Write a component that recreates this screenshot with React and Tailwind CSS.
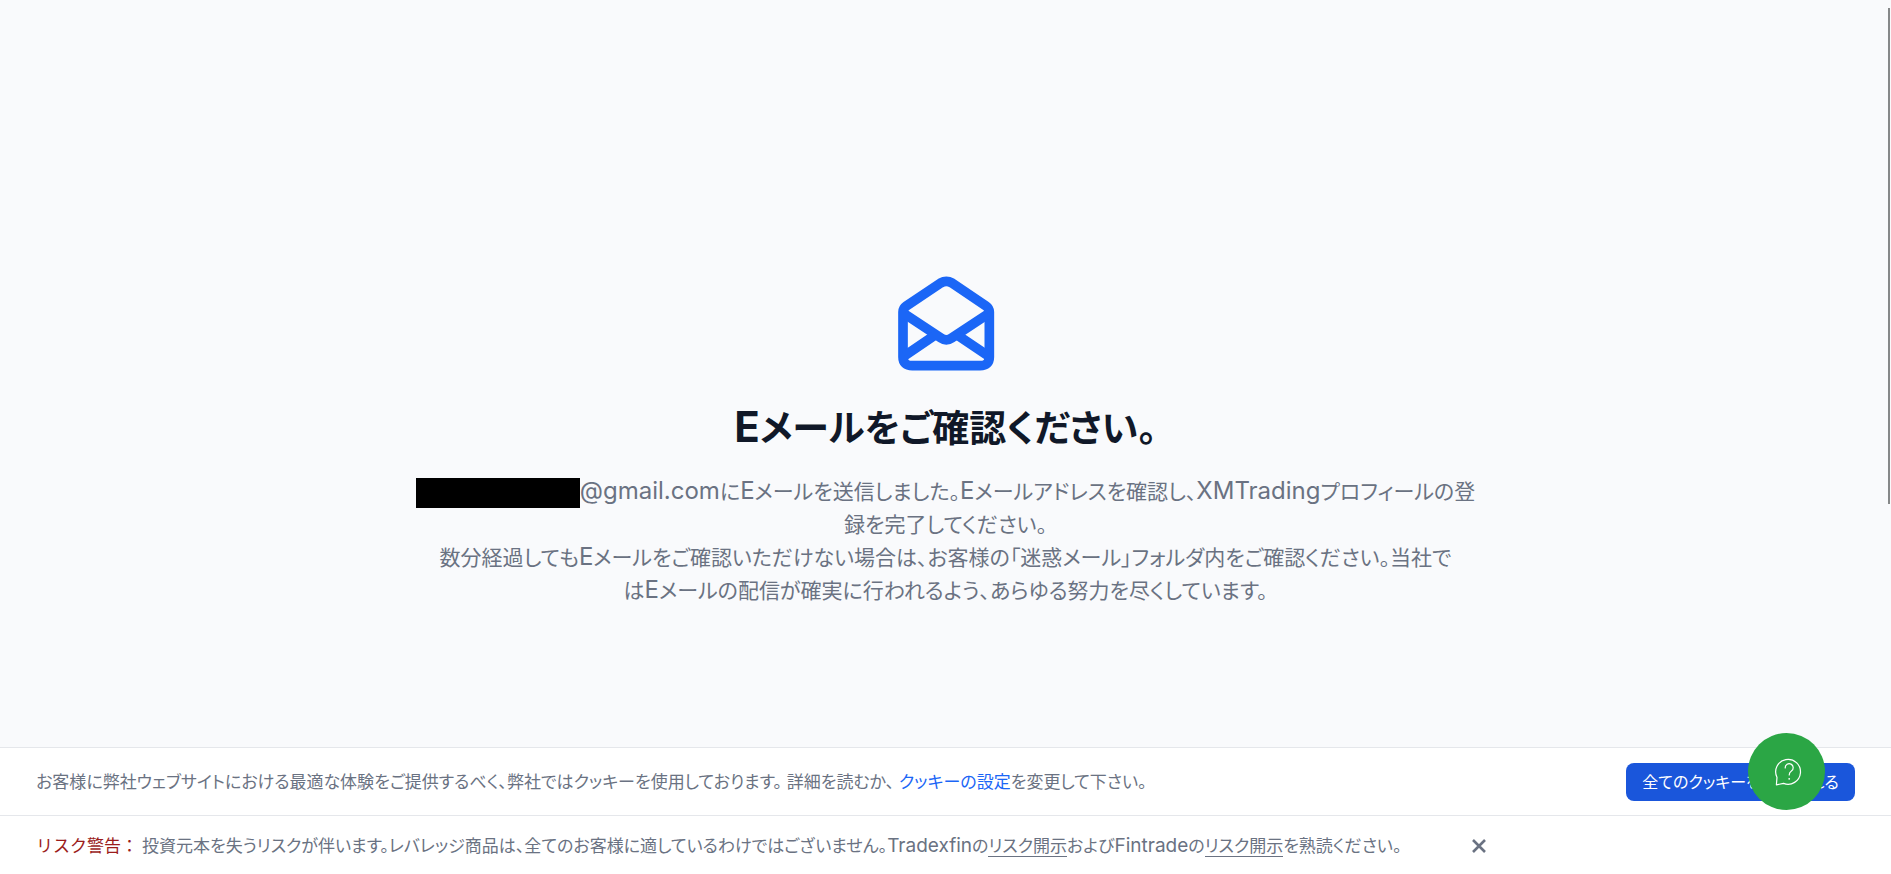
import { useState } from 'react';

function MailOpenIcon() {
  return (
    <svg className="w-25 h-24" viewBox="109 75 300 288" fill="none" stroke="#1b66f6" strokeWidth="29" strokeLinejoin="round" aria-hidden="true">
      <path d="M130 186 Q130 175 140 168 L243 99 Q260 89 277 99 L379 168 Q389 175 389 186 V321 Q389 347 361 347 H158 Q130 347 130 321 Z" />
      <path d="M135 192 L244 264 Q260 275 276 264 L385 192" />
      <path d="M135 317 L222 258 M385 317 L297 258" />
    </svg>
  );
}

function HelpIcon() {
  return (
    <svg className="w-7 h-7" viewBox="0 0 28 28" fill="none" stroke="currentColor" strokeWidth="1.2" strokeLinecap="round" strokeLinejoin="round" aria-hidden="true">
      <path d="M1.4 26.8 L2 19.4 A12.4 12.4 0 1 1 8.6 25.4 Z" />
      <path d="M10.2 10 V9.8 A4 4 0 1 1 16.4 13 Q14.2 14.4 14.2 17" />
      <circle cx="14.2" cy="20.8" r="0.9" fill="currentColor" stroke="none" />
    </svg>
  );
}

// Latin text is set a little larger than the Japanese text round it
function Latin({ children }) {
  return <span className="text-[24px] leading-none">{children}</span>;
}

export default function App() {
  const [showRisk, setShowRisk] = useState(true);

  return (
    <div className="relative flex min-h-screen flex-col bg-[#f9fafc] font-['Inter','Noto_Sans_CJK_JP',sans-serif] text-gray-500 [font-feature-settings:'palt']">
      <main className="flex flex-1 flex-col items-center px-6 pt-[275px]">
        <MailOpenIcon />
        <h1 className="mt-8 text-center text-[37px] leading-12 font-bold text-gray-900">
          <span className="text-[42px]">E</span>メールをご確認ください。
        </h1>
        <p className="mt-[22px] text-center text-[21px] leading-[33px]">
          <span className="inline-block h-[30px] w-[164px] bg-black align-middle"></span>
          <Latin>@gmail.com</Latin>に<Latin>E</Latin>メールを送信しました。<Latin>E</Latin>メールアドレスを確認し、<Latin>XMTrading</Latin>プロフィールの登
          <br />
          録を完了してください。
          <br />
          数分経過しても<Latin>E</Latin>メールをご確認いただけない場合は、お客様の「迷惑メール」フォルダ内をご確認ください。当社で
          <br />
          は<Latin>E</Latin>メールの配信が確実に行われるよう、あらゆる努力を尽くしています。
        </p>
      </main>

      <footer className="bg-white text-[17px] leading-7">
        <div className="relative flex items-center justify-between border-t border-gray-200 px-9 pt-[15px] pb-[14px]">
          <p>
            お客様に弊社ウェブサイトにおける最適な体験をご提供するべく、弊社ではクッキーを使用しております。 詳細を読むか、{' '}
            <a href="#cookies" className="text-[#1b66f6]">クッキーの設定</a>を変更して下さい。
          </p>
          <button type="button" className="h-[38px] w-[229px] rounded-lg bg-[#1a56db] text-[16px] whitespace-nowrap text-white">
            全てのクッキーを受け入れる
          </button>
          <button type="button" aria-label="ヘルプ" className="absolute right-[66px] -top-[15px] flex h-[77px] w-[77px] items-center justify-center rounded-full bg-[#2ba645] pl-1 text-white">
            <HelpIcon />
          </button>
        </div>

        {showRisk && (
          <div className="flex items-center border-t border-gray-200 px-9 pt-4 pb-[14px]">
            <p>
              <span className="mr-1 text-[#9b1c1c] [font-feature-settings:normal]">リスク警告：</span>
              投資元本を失うリスクが伴います。レバレッジ商品は、全てのお客様に適しているわけではございません。
              <span className="text-[19px]">Tradexfin</span>の
              <a href="#tradexfin" className="border-b border-gray-500">リスク開示</a>および<span className="text-[19px]">Fintrade</span>の
              <a href="#fintrade" className="border-b border-gray-500">リスク開示</a>を熟読ください。
            </p>
            <button type="button" aria-label="閉じる" className="ml-[70px]" onClick={() => setShowRisk(false)}>
              <svg className="h-4 w-4" viewBox="0 0 16 16" fill="none" stroke="currentColor" strokeWidth="2.6" aria-hidden="true">
                <path d="M2 2 L14 14 M14 2 L2 14" />
              </svg>
            </button>
          </div>
        )}
      </footer>

      <div className="absolute top-2 right-px h-[496px] w-0.5 bg-[#868889]"></div>
    </div>
  );
}
